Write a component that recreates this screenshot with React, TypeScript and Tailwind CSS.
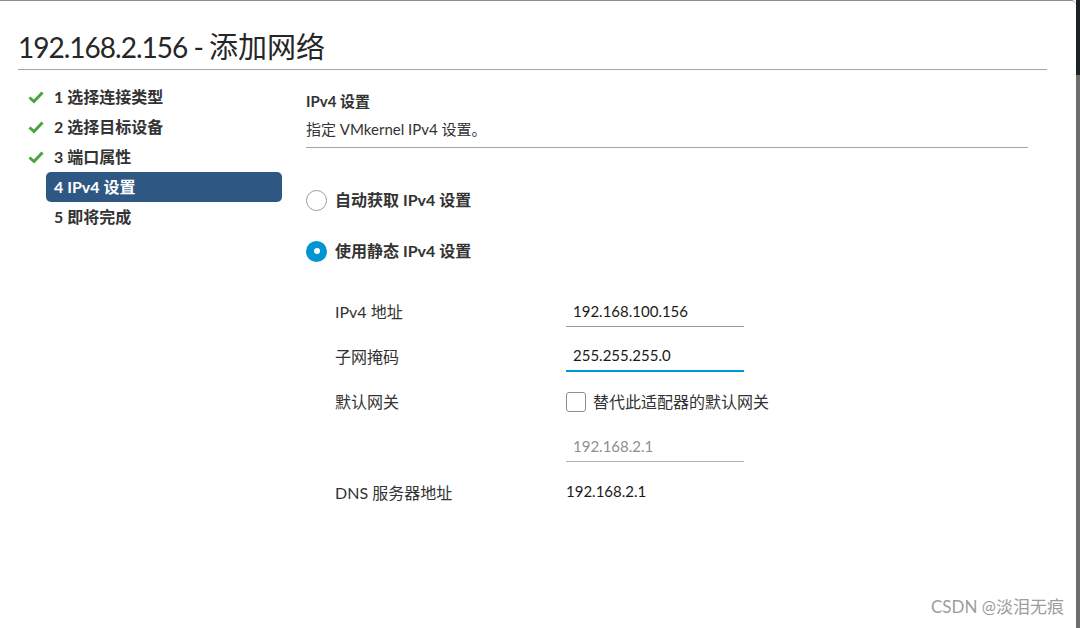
// App.tsx
// vSphere "添加网络" wizard – IPv4 settings step

const FONT = "font-['Lato','Noto_Sans_CJK_SC',sans-serif]";

const STEPS = [
  { label: '1 选择连接类型', done: true },
  { label: '2 选择目标设备', done: true },
  { label: '3 端口属性', done: true },
  { label: '4 IPv4 设置', active: true },
  { label: '5 即将完成' },
];

function Check() {
  return (
    <svg width="16" height="14" viewBox="0 0 16 14">
      <path d="M1.5 7.5 L6 11.5 L14.5 2.5" fill="none" stroke="#46a53c" strokeWidth="3" strokeLinejoin="miter" />
    </svg>
  );
}

function StepNav() {
  return (
    <div className="flex flex-col w-[264px] pt-[12px] shrink-0">
      {STEPS.map((s) => (
        <div key={s.label} className="flex items-center h-[30px]">
          <div className="w-[28px] pl-[10px] flex items-center">{s.done && <Check />}</div>
          <div
            className={
              s.active
                ? 'flex-1 h-[30px] flex items-center px-[8px] rounded-[5px] bg-[#2e5883] text-white text-[16px] font-bold'
                : 'flex-1 h-[30px] flex items-center px-[8px] text-[#333] text-[16px] font-bold'
            }
          >
            {s.label}
          </div>
        </div>
      ))}
    </div>
  );
}

function Radio({ checked, label }: { checked?: boolean; label: string }) {
  return (
    <div className="flex items-center h-[20px] gap-[8px]">
      {checked ? (
        <span className="w-[21px] h-[21px] rounded-full bg-[#0095d3] flex items-center justify-center">
          <span className="w-[6px] h-[6px] rounded-full bg-white" />
        </span>
      ) : (
        <span className="w-[21px] h-[21px] rounded-full border border-[#9b9b9b] bg-white" />
      )}
      <span className="text-[16px] font-bold text-[#333]">{label}</span>
    </div>
  );
}

export default function App() {
  return (
    <div className={`${FONT} w-[1080px] h-[628px] flex bg-white relative overflow-hidden`}>
      {/* dialog panel */}
      <div className="flex-1 border-t border-[#8e8e8e] rounded-tr-[5px] bg-white flex flex-col">
        <div className="mx-[18px] mr-[29px] mt-[27px] h-[42px] border-b border-[#a6a6a6] leading-[38px] text-[#262626]">
          <span className="text-[28px] tracking-[-1px]">192.168.2.156 - </span>
          <span className="text-[29px]">添加网络</span>
        </div>

        <div className="flex pl-[18px]">
          <StepNav />

          <div className="ml-[24px] flex flex-col">
            <div className="w-[722px] pt-[21px] pb-[8px] border-b border-[#a6a6a6]">
              <div className="text-[15px] leading-[20px] font-bold text-[#333]">IPv4 设置</div>
              <div className="mt-[8px] text-[15px] leading-[20px] text-[#333]">指定 VMkernel IPv4 设置。</div>
            </div>

            <div className="mt-[42px] flex flex-col gap-[31px]">
              <Radio label="自动获取 IPv4 设置" />
              <Radio checked label="使用静态 IPv4 设置" />
            </div>

            <div className="pl-[29px] mt-[35px] flex flex-col text-[16px] text-[#333]">
              <div className="flex items-center h-[31px]">
                <div className="w-[231px]">IPv4 地址</div>
                <div className="w-[178px] h-[31px] border-b border-[#9a9a9a] pl-[7px] leading-[30px] text-[15px] text-[#1a1a1a]">
                  192.168.100.156
                </div>
              </div>

              <div className="flex items-center h-[31px] mt-[14px]">
                <div className="w-[231px]">子网掩码</div>
                <div className="w-[178px] h-[31px] border-b-2 border-[#0095d3] pl-[7px] leading-[29px] text-[15px] text-[#1a1a1a]">
                  255.255.255.0
                </div>
              </div>

              <div className="flex items-center h-[20px] mt-[20px]">
                <div className="w-[231px]">默认网关</div>
                <div className="flex items-center gap-[7px]">
                  <span className="w-[20px] h-[20px] rounded-[3px] border border-[#8c8c8c] bg-white" />
                  <span>替代此适配器的默认网关</span>
                </div>
              </div>

              <div className="flex items-center h-[31px] mt-[19px]">
                <div className="w-[231px]" />
                <div className="w-[178px] h-[31px] border-b border-[#b3b3b3] pl-[7px] leading-[30px] text-[15px] text-[#8f8f8f]">
                  192.168.2.1
                </div>
              </div>

              <div className="flex items-center h-[22px] mt-[18px]">
                <div className="w-[231px] pt-[3px]">DNS 服务器地址</div>
                <div className="text-[15px] text-[#1a1a1a]">192.168.2.1</div>
              </div>
            </div>
          </div>
        </div>
      </div>

      {/* background window edge */}
      <div className="w-[4px] flex flex-col">
        <div className="h-[75px] bg-[#1c2228]" />
        <div className="flex-1 bg-[#6d6d6d]" />
      </div>

      <div className="absolute right-[16px] bottom-[9px] text-[17px] text-[#9d9d9d]">CSDN @淡泪无痕</div>
    </div>
  );
}
